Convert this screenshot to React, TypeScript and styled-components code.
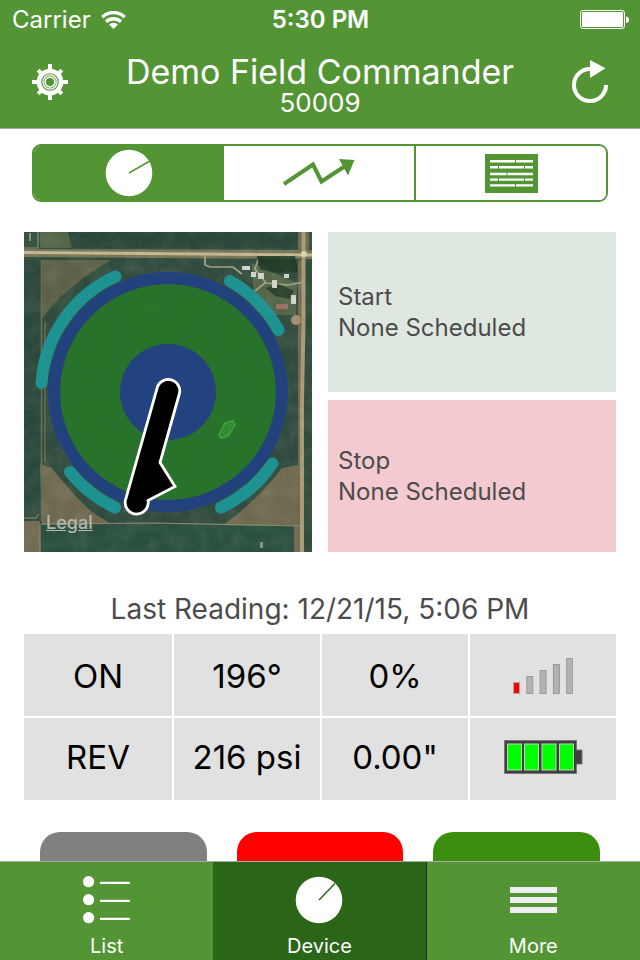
import React from "react";
import styled, { createGlobalStyle, css } from "styled-components";

const green = "#539534";
const darkGreen = "#2b6618";

const GlobalStyle = createGlobalStyle`
  * { box-sizing: border-box; }
  body { margin: 0; background: #fff; font-family: Inter, "Liberation Sans", sans-serif; }
  button { font: inherit; border: 0; padding: 0; margin: 0; cursor: pointer; }
  h1, p { margin: 0; font-weight: 400; }
  svg { display: block; flex: none; }
`;

const Screen = styled.div`
  display: flex;
  flex-direction: column;
  height: 100vh;
  overflow: hidden;
`;

const Header = styled.header`
  flex: none;
  background: ${green};
  color: #fff;
  border-bottom: 1px solid #a9aaa8;
`;

const StatusBar = styled.div`
  display: grid;
  grid-template-columns: 1fr auto 1fr;
  align-items: center;
  height: 40px;
  padding: 0 11px 0 12px;
  font-size: 24px;
  line-height: 40px;
`;

const Carrier = styled.span`
  display: flex;
  align-items: center;
  gap: 10px;
`;

const Clock = styled.time`
  font-size: 24px;
  font-weight: 600;
`;

const BatterySlot = styled.span`
  justify-self: end;
`;

const NavBar = styled.div`
  display: grid;
  grid-template-columns: 36px 1fr 36px;
  align-items: center;
  height: 88px;
  padding: 0 32px 4px;
`;

const IconButton = styled.button`
  display: flex;
  justify-content: center;
  background: none;
  color: inherit;
`;

const Titles = styled.div`
  padding-top: 8px;
  text-align: center;
`;

const Title = styled.h1`
  font-size: 34px;
  line-height: 34px;
`;

const Subtitle = styled.p`
  font-size: 26px;
  line-height: 28px;
`;

const Main = styled.main`
  flex: 1;
  min-height: 0;
  overflow-y: auto;
  scrollbar-width: none;
  padding: 15px 24px 40px;
`;

const Segments = styled.div`
  display: flex;
  height: 58px;
  margin: 0 8px 30px;
  border: 2px solid ${green};
  border-radius: 9px;
  overflow: hidden;
`;

const Segment = styled.button<{ $active?: boolean }>`
  flex: 1;
  display: flex;
  align-items: center;
  justify-content: center;
  background: ${(p) => (p.$active ? green : "#fff")};
  color: ${(p) => (p.$active ? "#fff" : green)};
  & + & + & { border-left: 2px solid ${green}; }
`;

const Overview = styled.section`
  display: grid;
  grid-template-columns: 1fr 1fr;
  gap: 16px;
`;

const MapPanel = styled.div`
  position: relative;
  height: 320px;
  overflow: hidden;
  > svg { width: 100%; height: 100%; }
`;

const LegalLink = styled.a`
  position: absolute;
  left: 22px;
  bottom: 18px;
  font-size: 18px;
  line-height: 22px;
  font-weight: 500;
  color: #b2b8ae;
`;

const Schedules = styled.div`
  display: grid;
  grid-template-rows: 20fr 19fr;
  gap: 8px;
`;

const Schedule = styled.section<{ $tone: "start" | "stop" }>`
  display: flex;
  flex-direction: column;
  justify-content: center;
  padding: 0 10px;
  font-size: 24px;
  line-height: 31px;
  color: #4c4c4c;
  background: ${(p) => (p.$tone === "start" ? "#dfe8e0" : "#f2cacf")};
`;

const Readings = styled.table`
  width: 100%;
  table-layout: fixed;
  border-spacing: 0;
  margin-bottom: 32px;
`;

const Caption = styled.caption`
  padding: 40px 0 7px;
  font-size: 28px;
  line-height: 35px;
  color: #4c4c4c;
`;

const Cell = styled.td`
  height: 82px;
  padding: 2px 0 0;
  background: #e1e1e1;
  text-align: center;
  font-size: 33px;
  & + & { border-left: 2px solid #fff; }
  tr + tr & { height: 84px; padding: 0 0 4px; border-top: 2px solid #fff; }
  svg { margin: 0 auto; }
`;

const Actions = styled.div`
  display: grid;
  grid-template-columns: repeat(3, 1fr);
  gap: 30px;
  padding: 0 16px;
`;

const ActionButton = styled.button<{ $color: string }>`
  height: 80px;
  border-radius: 20px;
  background: ${(p) => p.$color};
`;

const TabBar = styled.nav`
  flex: none;
  display: grid;
  grid-template-columns: repeat(3, 1fr);
  height: 99px;
  border-top: 1px solid #a9aaa8;
  background: ${green};
`;

const Tab = styled.button<{ $active?: boolean }>`
  display: flex;
  flex-direction: column;
  align-items: center;
  justify-content: space-between;
  padding: 14px 0 2px;
  background: ${green};
  color: #fff;
  font-size: 20px;
  line-height: 24px;
  ${(p) => p.$active && css`
    background: ${darkGreen};
    border-right: 1px solid #143708;
  `}
`;

const WifiIcon = () => (
  <svg width="25" height="18" viewBox="0 0 25 18" aria-hidden="true">
    <g fill="none" stroke="#fff" strokeWidth="3.4">
      <path d="M1.3 6.2a16 16 0 0 1 22.4 0" />
      <path d="M5.1 10.700a10.6 10.6 0 0 1 14.8 0" />
    </g>
    <path d="M12.5 18 8 13.6a6.300 6.300 0 0 1 9 0z" fill="#fff" />
  </svg>
);

const PhoneBattery = () => (
  <svg width="49" height="20" viewBox="0 0 49 20" aria-hidden="true">
    <rect x=".5" y=".5" width="44" height="18" rx="2.5" fill="none" stroke="#fff" />
    <rect x="2" y="2" width="41" height="15" rx="1" fill="#fff" />
    <path d="M46 6.5c4 0 4 6.5 0 6.5z" fill="#fff" />
  </svg>
);

const GearIcon = () => (
  <svg width="36" height="36" viewBox="-18 -18 36 36" aria-hidden="true">
    <g fill="#fff">
      {[0, 45, 90, 135].map((a) => (
        <rect key={a} x="-2" y={a % 90 ? -16.8 : -18} width="4" height={a % 90 ? 33.6 : 36} transform={`rotate(${a})`} />
      ))}
      <circle r="13.3" />
    </g>
    <circle r="8.8" fill={green} />
    <g fill="none" stroke="#fff">
      <circle r="7.1" strokeWidth="1.2" />
      <circle r="4.9" strokeWidth="1.7" />
    </g>
  </svg>
);

const RefreshIcon = () => (
  <svg width="36" height="44" viewBox="0 0 36 44" aria-hidden="true">
    <path d="M34 25a16 16 0 1 1-16-16" fill="none" stroke="#fff" strokeWidth="4" />
    <path d="M18 0 33.5 8.3 18 18z" fill="#fff" />
  </svg>
);

const PivotIcon = ({ line, x, y }: { line: string; x: number; y: number }) => (
  <svg width="48" height="48" viewBox="-24 -24 48 48" aria-hidden="true">
    <circle r="23.3" fill="#fff" />
    <path d={`M0 0 ${x} ${y}`} stroke={line} strokeWidth="1.5" />
  </svg>
);

const TrendIcon = () => (
  <svg width="72" height="30" viewBox="0 0 72 30" aria-hidden="true">
    <path d="M1 26 30 6.5 38.5 23.5 63 7.5" fill="none" stroke={green} strokeWidth="4" />
    <path d="M56 1 71.5 2 65 17.5z" fill={green} />
  </svg>
);

const LogIcon = () => (
  <svg width="53" height="39" viewBox="0 0 53 39" aria-hidden="true">
    <path fill={green} d="M0 0h53v39H0z" />
    <g stroke="#fff" strokeWidth="2.4">
      <path d="M5 7.3h25M31 7.3h17M5 13.2h8M14 13.2h25M40 13.2h8M5 20h16.5M22.5 20H48M5 25.6h8M14 25.6h25M40 25.6h8M5 31.4h25M31 31.4h17" />
    </g>
  </svg>
);

const ListIcon = () => (
  <svg width="48" height="48" viewBox="0 0 48 48" aria-hidden="true">
    {[5.7, 23.7, 41.7].map((y) => (
      <g key={y} fill="#fff">
        <circle cx="5.6" cy={y} r="5.6" />
        <rect x="17" y={y + 0.1} width="30" height="2.2" />
      </g>
    ))}
  </svg>
);

const MoreIcon = () => (
  <svg width="47" height="48" viewBox="0 0 47 48" aria-hidden="true">
    <path d="M0 11h47v6H0zM0 21h47v6H0zM0 31h47v6H0z" fill="#efeff1" />
  </svg>
);

const SignalIcon = () => (
  <svg width="60" height="36" viewBox="0 0 60 36" role="img" aria-label="Signal 1 of 5">
    {[12, 18, 24, 30, 36].map((h, i) => (
      <rect key={h} x={i * 13.3 + 0.5} y={36.5 - h} width="6" height={h - 1} fill={i ? "#b2b2b2" : "#f00"} stroke={i ? "#999" : "#a6a6a6"} />
    ))}
  </svg>
);

const DeviceBattery = () => (
  <svg width="79" height="34" viewBox="0 0 79 34" role="img" aria-label="Battery full">
    <path d="M.5.5h72V10H78v14h-5.5v9.5H.5z" fill="#404040" stroke="#777" />
    {[4, 21, 38.5, 56].map((x) => (
      <rect key={x} x={x - 0.5} y="4" width="14" height="26" fill="#0f0" stroke="#b9d8b9" />
    ))}
  </svg>
);

const FieldMap = () => (
  <svg viewBox="0 0 288 320" preserveAspectRatio="xMidYMid slice" role="img" aria-label="Field map, pivot at 196 degrees">
    <defs>
      <filter id="grain" x="0" y="0" width="100%" height="100%">
        <feTurbulence type="fractalNoise" baseFrequency=".06" numOctaves="4" seed="8" />
        <feColorMatrix values="0 0 0 0 .65  0 0 0 0 .65  0 0 0 0 .5  .9 .5 0 0 -.55" />
      </filter>
      <filter id="speckle" x="0" y="0" width="100%" height="100%">
        <feTurbulence type="fractalNoise" baseFrequency=".2" numOctaves="3" seed="3" />
        <feColorMatrix values="0 0 0 0 .08  0 0 0 0 .16  0 0 0 0 .1  2 1 0 0 -1.2" />
      </filter>
      <filter id="soft"><feGaussianBlur stdDeviation=".6" /></filter>
    </defs>
    <path fill="#304b3e" d="M0 0h288v320H0z" />
    <g filter="url(#soft)">
      <path fill="#29463a" d="M45 0h230v16H45zM0 28h16v250H0z" />
      <path fill="#536447" d="M16 0h28l4 16H16z" />
      <path fill="#5d6249" d="M17 28h70Q40 55 18 87z" />
      <path fill="#6f6a4f" d="M16 232 28 236Q48 262 68 280L87 292 18 293zM275 233 258 236Q232 270 199 293L276 294z" />
      <path fill="#2b4f3e" d="M17 294h260v26H17z" />
      <path fill="#746b51" d="M0 289h16v31H0z" />
      <path fill="#54664a" d="M228 31 273 51 272 83 248 83 230 65z" />
      <path fill="#334b3b" d="M283 28h5v292h-5z" />
      <path fill="#716751" d="M274 28h4v260h-4zM270 292h8v28h-8zM274 0h11v18h-11z" />
      <path fill="#777657" d="M0 17 288 18v9L0 25z" />
      <path fill="none" stroke="#c5b996" strokeWidth="3" d="M0 20.5 288 23" />
      <path fill="none" stroke="#ab9b78" strokeWidth="4" d="M279.5 0V90L278 170V320" />
      <path fill="none" stroke="#686a50" strokeWidth="1.5" d="M17.5 28V290M21 90V230" />
      <path fill="none" stroke="#8a8a70" strokeWidth="1.2" d="M17 292 130 291 276 294M0 286h12l3-4M16 320v-28M0 16h14V0" />
      <path fill="none" stroke="#aaa184" strokeWidth="1.7" d="M181 24v9l5 2h23l9 7M234 28l-3 9 11 14 22 2 16-3M241 51l-10 8" />
      <path fill="#193522" d="M233 24h38l3 16-24 1-14-4zM242 56l12-4 16 7-5 8-14-3z" opacity=".8" />
      <path fill="#9c7267" d="M252 72h12v5h-12z" />
      <circle cx="272" cy="88" r="5" fill="#a98f73" />
      <g fill="#d5d6ce">
        <path d="M218 34h8v4h-8zM227 40h5v5h-5zM234 41h6v6h-6zM248 48h5v8h-5zM267 63h5v9h-5zM260 42h5v4h-5z" />
        <path d="M5 1h2v8H5zM236 310h3v6h-3z" opacity=".5" />
      </g>
      <circle cx="280" cy="22" r="3" fill="#e4d8b5" />
    </g>
    <path fill="#000" filter="url(#grain)" opacity=".2" d="M0 0h288v320H0z" />
    <path fill="#000" filter="url(#speckle)" opacity=".1" d="M0 0h288v320H0z" />
    <circle cx="144" cy="160" r="108" fill="#277529" opacity=".94" />
    <circle cx="144" cy="160" r="114" fill="none" stroke="#22427f" strokeWidth="12" opacity=".97" />
    <circle cx="144" cy="160" r="48" fill="#22437f" />
    <path d="M36 160h60M192 160h60" stroke="#28602c" opacity=".4" />
    <path d="M195 203 201 191 209 189 211 193 204 204 197 206z" fill="#359235" fillOpacity=".5" stroke="#4bb53e" strokeOpacity=".6" strokeWidth="2" strokeLinejoin="round" />
    <path d="m199 202 4-8 4-1-4 9z" fill="none" stroke="#4bb53e" opacity=".5" />
    <g fill="none" stroke="#1b9a9a" strokeWidth="12" strokeLinecap="round" opacity=".9">
      <path d="M17.5 151A126.5 126.5 0 0 1 91.5 44.5" />
      <path d="M206 49A127 127 0 0 1 254.5 98" />
      <path d="M248.5 231.5A127 127 0 0 1 197 275.5" />
      <path d="M91 275.5A127 127 0 0 1 46 240" />
    </g>
    <path d="M132.9 157A11.5 11.5 0 1 1 155 163L136 230.5 151 254.5 124 268.5A11.5 11.5 0 1 1 101.4 268.3Z" fill="#000" stroke="#fff" strokeWidth="2.8" />
  </svg>
);

export default function App() {
  return (
    <Screen>
      <GlobalStyle />
      <Header>
        <StatusBar>
          <Carrier>Carrier <WifiIcon /></Carrier>
          <Clock>5:30 PM</Clock>
          <BatterySlot><PhoneBattery /></BatterySlot>
        </StatusBar>
        <NavBar>
          <IconButton aria-label="Settings"><GearIcon /></IconButton>
          <Titles>
            <Title>Demo Field Commander</Title>
            <Subtitle>50009</Subtitle>
          </Titles>
          <IconButton aria-label="Refresh"><RefreshIcon /></IconButton>
        </NavBar>
      </Header>
      <Main>
        <Segments>
          <Segment $active aria-label="Status" aria-pressed="true"><PivotIcon line={green} x={20} y={-11.5} /></Segment>
          <Segment aria-label="Trend"><TrendIcon /></Segment>
          <Segment aria-label="Log"><LogIcon /></Segment>
        </Segments>
        <Overview>
          <MapPanel>
            <FieldMap />
            <LegalLink href="#legal">Legal</LegalLink>
          </MapPanel>
          <Schedules>
            <Schedule $tone="start"><p>Start</p><p>None Scheduled</p></Schedule>
            <Schedule $tone="stop"><p>Stop</p><p>None Scheduled</p></Schedule>
          </Schedules>
        </Overview>
        <Readings>
          <Caption>Last Reading: 12/21/15, 5:06 PM</Caption>
          <tbody>
            <tr><Cell>ON</Cell><Cell>196°</Cell><Cell>0%</Cell><Cell><SignalIcon /></Cell></tr>
            <tr><Cell>REV</Cell><Cell>216 psi</Cell><Cell>0.00"</Cell><Cell><DeviceBattery /></Cell></tr>
          </tbody>
        </Readings>
        <Actions>
          <ActionButton $color="#808080" aria-label="Standby" />
          <ActionButton $color="#ff0000" aria-label="Stop" />
          <ActionButton $color="#3c8e0e" aria-label="Start" />
        </Actions>
      </Main>
      <TabBar>
        <Tab><ListIcon />List</Tab>
        <Tab $active aria-current="page"><PivotIcon line={darkGreen} x={16} y={-16.5} />Device</Tab>
        <Tab><MoreIcon />More</Tab>
      </TabBar>
    </Screen>
  );
}
